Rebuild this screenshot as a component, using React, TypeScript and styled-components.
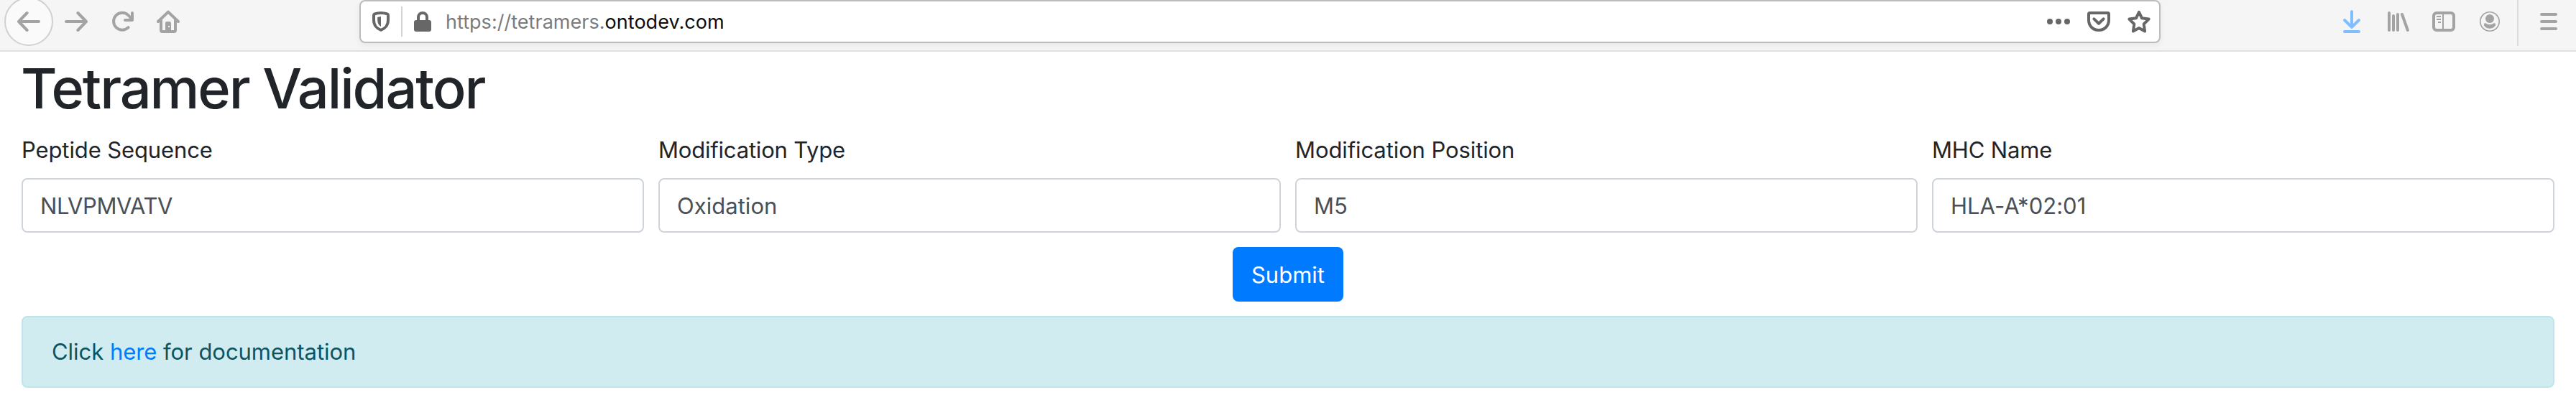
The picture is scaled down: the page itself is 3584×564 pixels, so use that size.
import React from 'react';
import styled, { createGlobalStyle } from 'styled-components';

const GlobalStyle = createGlobalStyle`
  *, *::before, *::after { box-sizing: border-box; }
  html, body { margin: 0; padding: 0; background: #fff; overflow: hidden; }
  body {
    font-family: Inter, 'Liberation Sans', sans-serif;
    font-size: 31px;
    font-weight: 400;
    line-height: 48px;
    color: #212529;
  }
`;

/* Browser toolbar */

const Toolbar = styled.header`
  display: flex;
  align-items: center;
  height: 72px;
  padding: 0 22px 10px 6px;
  background: #f5f5f5;
  border-bottom: 2px solid #e0e0e0;
`;

const NavButtons = styled.nav`
  display: flex;
  flex: none;
  align-items: center;
  gap: 32px;
  width: 494px;
  height: 60px;
`;

const BackButton = styled.div`
  display: flex;
  flex: none;
  align-items: center;
  justify-content: center;
  width: 68px;
  height: 68px;
  margin-right: -16px;
  border: 2px solid #d0d0d0;
  border-radius: 50%;
  background: #fafafa;
`;

const Icon = styled.svg<{ $tone?: string }>`
  display: block;
  flex: none;
  width: 32px;
  height: 32px;
  color: ${(p) => p.$tone ?? '#a3a3a3'};
  fill: none;
  stroke: currentColor;
  stroke-width: 4;
  stroke-linecap: round;
  stroke-linejoin: round;

  .solid { fill: currentColor; stroke: none; }
  .thin { stroke-width: 1.6; }
`;

const AddressBar = styled.div`
  display: flex;
  flex: none;
  align-items: center;
  width: 2506px;
  height: 60px;
  margin-right: auto;
  padding: 0 12px;
  background: #fff;
  border: 2px solid #bcbcbc;
  border-radius: 8px;
  box-shadow: 0 3px 8px rgba(0, 0, 0, 0.06);
`;

const AddressDivider = styled.span`
  width: 2px;
  height: 42px;
  margin: 0 12px;
  background: #d3d3d3;
`;

const Address = styled.div`
  flex: 1;
  padding-top: 2px;
  margin-left: 16px;
  font-size: 27px;
  letter-spacing: 0.03px;
  color: #7b7b7b;
  white-space: nowrap;

  strong { font-weight: 400; color: #0c0c0d; }
`;

const PageActions = styled.div`
  display: flex;
  gap: 24px;
`;

const BrowserTools = styled.div`
  display: flex;
  align-items: center;
  gap: 32px;
  height: 60px;
`;

const ToolsDivider = styled.span`
  width: 2px;
  height: 64px;
  margin: 4px -6px 0 -10px;
  background: #dcdcdc;
`;

/* Page */

const Page = styled.main`
  padding: 3px 30px 24px;
`;

const Title = styled.h1`
  margin: 0 0 14px -1px;
  font-size: 77.5px;
  font-weight: 500;
  line-height: 96px;
  letter-spacing: -2.1px;
`;

const FieldRow = styled.div`
  display: grid;
  grid-template-columns: repeat(4, 1fr);
  gap: 20px;
`;

const Field = styled.div`
  display: flex;
  flex-direction: column;
  gap: 15px;
`;

const Label = styled.label<{ $tracking: number }>`
  letter-spacing: ${(p) => p.$tracking}px;
`;

const TextInput = styled.input<{ $tracking: number }>`
  width: 100%;
  height: 76px;
  padding: 1px 24px 0;
  border: 2px solid #ced4da;
  border-radius: 8px;
  background: #fff;
  color: #495057;
  font: inherit;
  letter-spacing: ${(p) => p.$tracking}px;
  outline: none;
`;

const Actions = styled.div`
  display: flex;
  justify-content: center;
  margin: 20px 0;
`;

const SubmitButton = styled.button`
  width: 154px;
  height: 76px;
  padding: 1px 0 0;
  border: 0;
  border-radius: 8px;
  background: #007bff;
  color: #fff;
  font: inherit;
`;

const Notice = styled.div`
  height: 100px;
  padding: 24px 40px;
  border: 2px solid #bee5eb;
  border-radius: 8px;
  background: #d1ecf1;
  color: #0c5460;
  letter-spacing: -0.04px;
`;

const DocsLink = styled.a`
  color: #007bff;
  text-decoration: none;
`;

const DARK = '#676767';

const fields = [
  { id: 'peptide', label: 'Peptide Sequence', value: 'NLVPMVATV', labelTracking: -0.11, valueTracking: -0.37 },
  { id: 'mod-type', label: 'Modification Type', value: 'Oxidation', labelTracking: -0.2, valueTracking: 0.03 },
  { id: 'mod-pos', label: 'Modification Position', value: 'M5', labelTracking: -0.1, valueTracking: 0 },
  { id: 'mhc', label: 'MHC Name', value: 'HLA-A*02:01', labelTracking: -0.14, valueTracking: 0.01 },
];

function BrowserChrome() {
  return (
    <Toolbar>
      <NavButtons>
        <BackButton>
          <Icon viewBox="0 0 32 32"><path d="M13.6 4L2 16l11.6 12M2.4 16H30" /></Icon>
        </BackButton>
        <Icon viewBox="0 0 32 32"><path d="M18.4 4L30 16 18.4 28M29.6 16H2" /></Icon>
        <Icon viewBox="0 0 32 32">
          <path d="M24.6 24.2A12 12 0 1 1 24.8 7.5L29 12" />
          <path d="M30 4v10H20" />
        </Icon>
        <Icon viewBox="0 0 32 32">
          <path d="M2 16L16 2.6 30 16M6 14v14q0 2 2 2h16q2 0 2-2V14" />
          <path className="solid" fillRule="evenodd" d="M14 16h4q2 0 2 2v13h-8V18q0-2 2-2zM16 22v2h2v-2z" />
        </Icon>
      </NavButtons>

      <AddressBar>
        <Icon $tone={DARK} viewBox="0 0 32 32">
          <path d="M16 4C12.5 4 9.5 4.6 7.3 5.4Q6 5.8 6 7.2V14c0 7 4.5 12 10 13.8C21.5 26 26 21 26 14V7.2Q26 5.8 24.7 5.4C22.5 4.6 19.5 4 16 4z" />
          <path className="solid" d="M16 9l-4.8 0.9V14c0 4 1.8 7.5 4.8 9z" />
        </Icon>
        <AddressDivider />
        <Icon $tone={DARK} viewBox="0 0 32 32">
          <path d="M10 16v-6a6 6 0 0 1 12 0v6" />
          <rect className="solid" x="4" y="14" width="24" height="16" rx="3" />
        </Icon>
        <Address>https://tetramers.<strong>ontodev.com</strong></Address>
        <PageActions>
          <Icon $tone={DARK} viewBox="0 0 32 32">
            <circle className="solid" cx="4" cy="16" r="4" />
            <circle className="solid" cx="16" cy="16" r="4" />
            <circle className="solid" cx="28" cy="16" r="4" />
          </Icon>
          <Icon $tone={DARK} viewBox="0 0 32 32">
            <path d="M3.5 4h25Q30 4 30 5.5V14c0 8-6 14-14 14S2 22 2 14V5.5Q2 4 3.5 4z" />
            <path d="M9.4 12.4l6.6 6.4 6.6-6.4" />
          </Icon>
          <Icon $tone={DARK} viewBox="0 0 32 32">
            <path d="M16 2.8l3.9 8.4 9.7 1.4-6.9 6.9 1.4 10L16 25l-8.1 4.5 1.4-10-6.9-6.9 9.7-1.4z" />
          </Icon>
        </PageActions>
      </AddressBar>

      <BrowserTools>
        <Icon $tone="#80bfff" viewBox="0 0 32 32">
          <path d="M16 2v21M6 14l10 9.8L26 14M6 30h20" />
        </Icon>
        <Icon viewBox="0 0 32 32"><path d="M4 4v24M10 8v20M16 6v22M22 6l7.8 22" /></Icon>
        <Icon viewBox="0 0 32 32">
          <rect x="2" y="4" width="28" height="24" rx="4" />
          <path className="solid" d="M14 4h2v24h-2zM6 8h6v2H6zM6 12h6v2H6zM8 16h4v2H8z" />
        </Icon>
        <Icon viewBox="0 0 32 32">
          <circle className="thin" cx="16" cy="16" r="13.2" />
          <circle className="solid" cx="16" cy="12" r="6" />
          <path className="solid" d="M7.8 20q0-2 2.4-1.7c3 2.6 8.6 2.6 11.6 0q2.4-0.3 2.4 1.7c-1 4-4.2 5.7-8.2 5.7s-7.2-1.7-8.2-5.7z" />
        </Icon>
        <ToolsDivider />
        <Icon viewBox="0 0 32 32"><path d="M6 6h20M6 16h20M6 26h20" /></Icon>
      </BrowserTools>
    </Toolbar>
  );
}

export default function App() {
  return (
    <>
      <GlobalStyle />
      <BrowserChrome />
      <Page>
        <Title>Tetramer Validator</Title>
        <FieldRow>
          {fields.map((f) => (
            <Field key={f.id}>
              <Label htmlFor={f.id} $tracking={f.labelTracking}>{f.label}</Label>
              <TextInput id={f.id} defaultValue={f.value} $tracking={f.valueTracking} />
            </Field>
          ))}
        </FieldRow>
        <Actions>
          <SubmitButton type="button">Submit</SubmitButton>
        </Actions>
        <Notice>
          Click <DocsLink href="#">here</DocsLink> for documentation
        </Notice>
      </Page>
    </>
  );
}
